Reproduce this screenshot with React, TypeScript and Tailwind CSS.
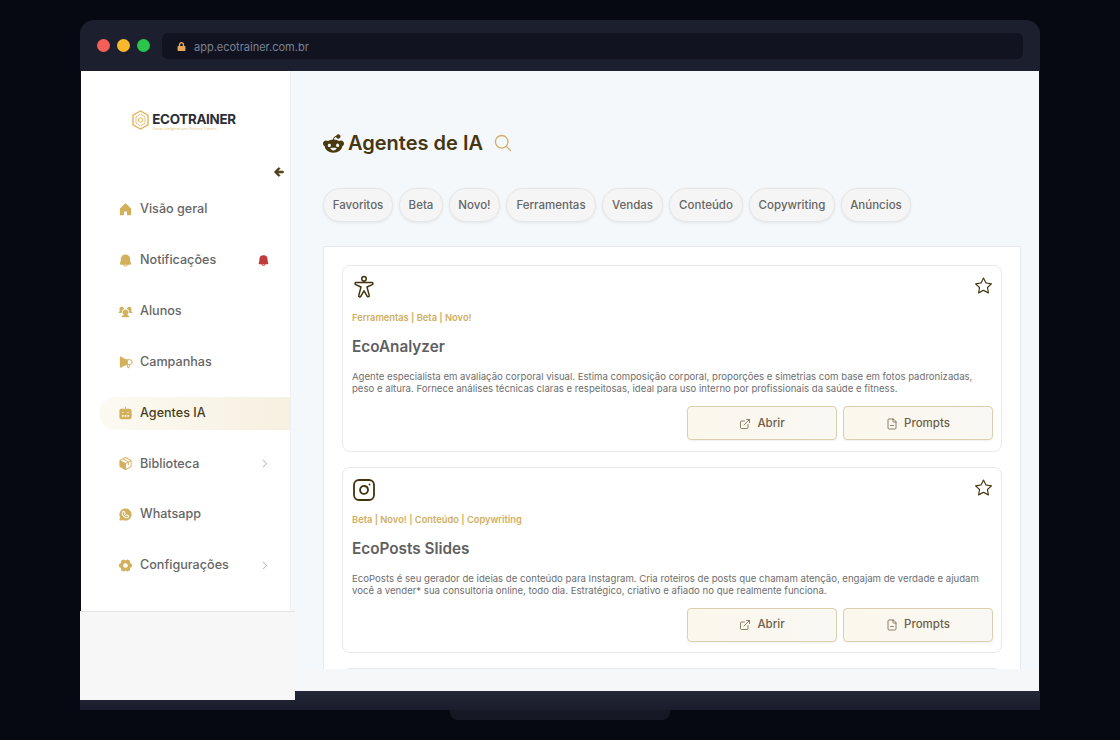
import React from "react";
import { FaLock, FaArrowLeft } from "react-icons/fa";
import { FaRedditAlien } from "react-icons/fa6";
import { BsStar } from "react-icons/bs";
import { ExternalLink, FileMinus, Instagram } from "lucide-react";
import {
  PiHouseFill, PiBellFill, PiUsersThreeFill, PiMegaphoneFill, PiRobotFill, PiPackageFill,
  PiWhatsappLogoFill, PiGearSixFill, PiMagnifyingGlass, PiPersonArmsSpread, PiCaretRight,
} from "react-icons/pi";

const font = "font-['Inter','Liberation_Sans',sans-serif]";

const nav = [
  { label: "Visão geral", Icon: PiHouseFill },
  { label: "Notificações", Icon: PiBellFill, bell: true },
  { label: "Alunos", Icon: PiUsersThreeFill },
  { label: "Campanhas", Icon: PiMegaphoneFill },
  { label: "Agentes IA", Icon: PiRobotFill, active: true },
  { label: "Biblioteca", Icon: PiPackageFill, caret: true },
  { label: "Whatsapp", Icon: PiWhatsappLogoFill },
  { label: "Configurações", Icon: PiGearSixFill, caret: true },
];

const chips = [
  { label: "Favoritos", w: "w-[70px]" },
  { label: "Beta", w: "w-[44px]" },
  { label: "Novo!", w: "w-[51px]" },
  { label: "Ferramentas", w: "w-[90px]" },
  { label: "Vendas", w: "w-[61px]" },
  { label: "Conteúdo", w: "w-[74px]" },
  { label: "Copywriting", w: "w-[86px]" },
  { label: "Anúncios", w: "w-[70px]" },
];

function Logo() {
  return (
    <div className="flex items-start gap-[3px]">
      <svg width="17" height="20" viewBox="0 0 17 20" fill="none" stroke="#e0b45c">
        <path d="M8.5 1 16 5.2v9.6L8.5 19 1 14.8V5.2Z" strokeWidth="1.4" />
        <path d="M8.5 4.2 13 6.8v6.4l-4.5 2.6L4 13.2V6.8Z" strokeWidth="0.8" />
        <circle cx="8.5" cy="10" r="2.2" strokeWidth="1" />
      </svg>
      <div className="flex flex-col pt-[2px]">
        <span className="text-[13.4px] leading-[15px] font-bold tracking-[-0.3px] text-[#2c2e38]">ECOTRAINER</span>
        <span className="text-[3.3px] leading-[5px] text-[#e6c678] whitespace-nowrap">Gestão inteligente para Personal Trainers</span>
      </div>
    </div>
  );
}

function Card({ icon, tags, title, lines }: { icon: React.ReactNode; tags: string; title: string; lines: string[] }) {
  return (
    <div className="h-[186.5px] shrink-0 rounded-[8px] border border-[#e9e9e9] bg-white pl-[9px] pr-[8px] pt-[9px] flex flex-col">
      <div className="flex justify-between items-start h-[28px]">
        {icon}
        <BsStar className="text-[17px] text-[#42330d] mr-[1px] mt-[2px]" />
      </div>
      <div className="mt-[8px] text-[9.3px] leading-[14px] font-semibold text-[#cfae62]">{tags}</div>
      <div className="mt-[12px] text-[15.3px] leading-[20px] font-semibold text-[#5f5f5f]">{title}</div>
      <div className="mt-[14px] text-[9.6px] leading-[12px] text-[#6e6e6e]">
        {lines.map((l) => (
          <div key={l} className="whitespace-nowrap">{l}</div>
        ))}
      </div>
      <div className="mt-[11px] flex justify-end gap-[6px]">
        {[
          { t: "Abrir", I: ExternalLink },
          { t: "Prompts", I: FileMinus },
        ].map(({ t, I }) => (
          <div
            key={t}
            className="w-[150px] h-[34px] pt-[1px] rounded-[4px] border border-[#dccfae] bg-gradient-to-r from-[#fbf7ec] to-[#faf8f4] shadow-[0_1px_2px_rgba(0,0,0,0.06)] flex items-center justify-center gap-[6px] text-[11.5px] font-medium text-[#6d6149]"
          >
            <I size={12} strokeWidth={1.6} />
            <span>{t}</span>
          </div>
        ))}
      </div>
    </div>
  );
}

export default function App() {
  return (
    <div className={`${font} relative h-[740px] w-[1120px] overflow-hidden bg-[#070912] pt-[20px] pl-[80px]`}>
      <div className="w-[960px]">
        <div className="h-[51px] rounded-t-[14px] bg-[#1c1f2e] flex items-center pl-[17px] pr-[17px]">
          <div className="flex items-center gap-[7px]">
            <span className="w-[13px] h-[13px] rounded-full bg-[#f55f58]" />
            <span className="w-[13px] h-[13px] rounded-full bg-[#fbb82f]" />
            <span className="w-[13px] h-[13px] rounded-full bg-[#2ac54a]" />
          </div>
          <div className="ml-[12px] flex-1 h-[26px] mt-[1px] rounded-[6px] bg-[#111420] flex items-center pl-[15px] gap-[8px]">
            <FaLock className="text-[9px] text-[#e8a85a]" />
            <span className="text-[11px] mt-[2px] text-[#7c8294]">app.ecotrainer.com.br</span>
          </div>
        </div>

        <div className="h-[620px] flex border-x border-[#0b0d16]">
          <aside className="w-[210px] shrink-0 bg-white border-r border-[#eef0f2]">
            <div className="h-[100px] flex items-center justify-center pr-[3px]">
              <Logo />
            </div>
            <div className="h-[12px] -mt-[5px] mb-[15px] flex items-center justify-end pr-[6px]">
              <FaArrowLeft className="text-[10px] text-[#4a3a10]" stroke="currentColor" strokeWidth={50} />
            </div>
            <nav className="flex flex-col gap-[17.9px] pl-[18px]">
              {nav.map(({ label, Icon, active, bell, caret }) => (
                <div
                  key={label}
                  className={`h-[33px] flex items-center pl-[19px] rounded-l-full ${active ? "bg-gradient-to-r from-[#fcfaf2] to-[#f6f0e0]" : ""}`}
                >
                  <Icon className="text-[15px] text-[#d2b05c]" />
                  <span className={`ml-[7px] text-[12.6px] font-medium ${active ? "text-[#4a3d1c]" : "text-[#666666]"}`}>{label}</span>
                  {bell && <PiBellFill className="ml-auto mr-[20px] text-[13px] text-[#c0393b]" />}
                  {caret && <PiCaretRight className="ml-auto mr-[20px] text-[11px] text-[#aaaaaa]" />}
                </div>
              ))}
            </nav>
          </aside>

          <main className="flex-1 min-w-0 bg-[#f5f8fb] pt-[57px] pl-[32px] pr-[18px] flex flex-col overflow-hidden">
            <div className="h-[30px] flex items-center">
              <FaRedditAlien className="text-[21px] text-[#4a3a10]" />
              <h1 className="ml-[4px] text-[20px] font-semibold text-[#453610]">Agentes de IA</h1>
              <PiMagnifyingGlass className="ml-[10px] text-[20px] text-[#cdb06c]" />
            </div>
            <div className="mt-[30px] flex gap-[6px]">
              {chips.map((c) => (
                <div
                  key={c.label}
                  className={`${c.w} h-[34px] pt-[1px] rounded-full bg-[#f5f5f5] border border-[#e6e6e6] shadow-[0_1px_3px_rgba(0,0,0,0.07)] flex items-center justify-center text-[11.5px] font-medium text-[#666666]`}
                >
                  {c.label}
                </div>
              ))}
            </div>
            <div className="mt-[24px] flex-1 min-h-0 border border-[#e8eaed] bg-white px-[18px] pt-[18px] flex flex-col gap-[15px] overflow-hidden rounded-t-[2px]">
              <Card
                icon={<PiPersonArmsSpread className="text-[24px] text-[#42330d]" />}
                tags="Ferramentas | Beta | Novo!"
                title="EcoAnalyzer"
                lines={[
                  "Agente especialista em avaliação corporal visual. Estima composição corporal, proporções e simetrias com base em fotos padronizadas,",
                  "peso e altura. Fornece análises técnicas claras e respeitosas, ideal para uso interno por profissionais da saúde e fitness.",
                ]}
              />
              <Card
                icon={<Instagram size={24} strokeWidth={1.8} className="text-[#42330d] mt-[1px]" />}
                tags="Beta | Novo! | Conteúdo | Copywriting"
                title="EcoPosts Slides"
                lines={[
                  "EcoPosts é seu gerador de ideias de conteúdo para Instagram. Cria roteiros de posts que chamam atenção, engajam de verdade e ajudam",
                  "você a vender* sua consultoria online, todo dia. Estratégico, criativo e afiado no que realmente funciona.",
                ]}
              />
              <div className="h-[40px] shrink-0 rounded-t-[8px] border border-[#e9e9e9] bg-white" />
            </div>
          </main>
        </div>

        <div className="h-[19px] bg-gradient-to-b from-[#232738] to-[#1a1d2b]" />
        <div className="ml-[370px] w-[220px] h-[10px] rounded-b-[8px] bg-[#161925]" />
      </div>

      <div className="absolute left-[295px] top-[669px] w-[744px] h-[22px] bg-[#f5f7f9]" />
      <div className="absolute left-[80px] top-[611px] w-[215px] h-[89px] bg-[#f7f7f7] border-t border-[#e4e4e4]" />
    </div>
  );
}
